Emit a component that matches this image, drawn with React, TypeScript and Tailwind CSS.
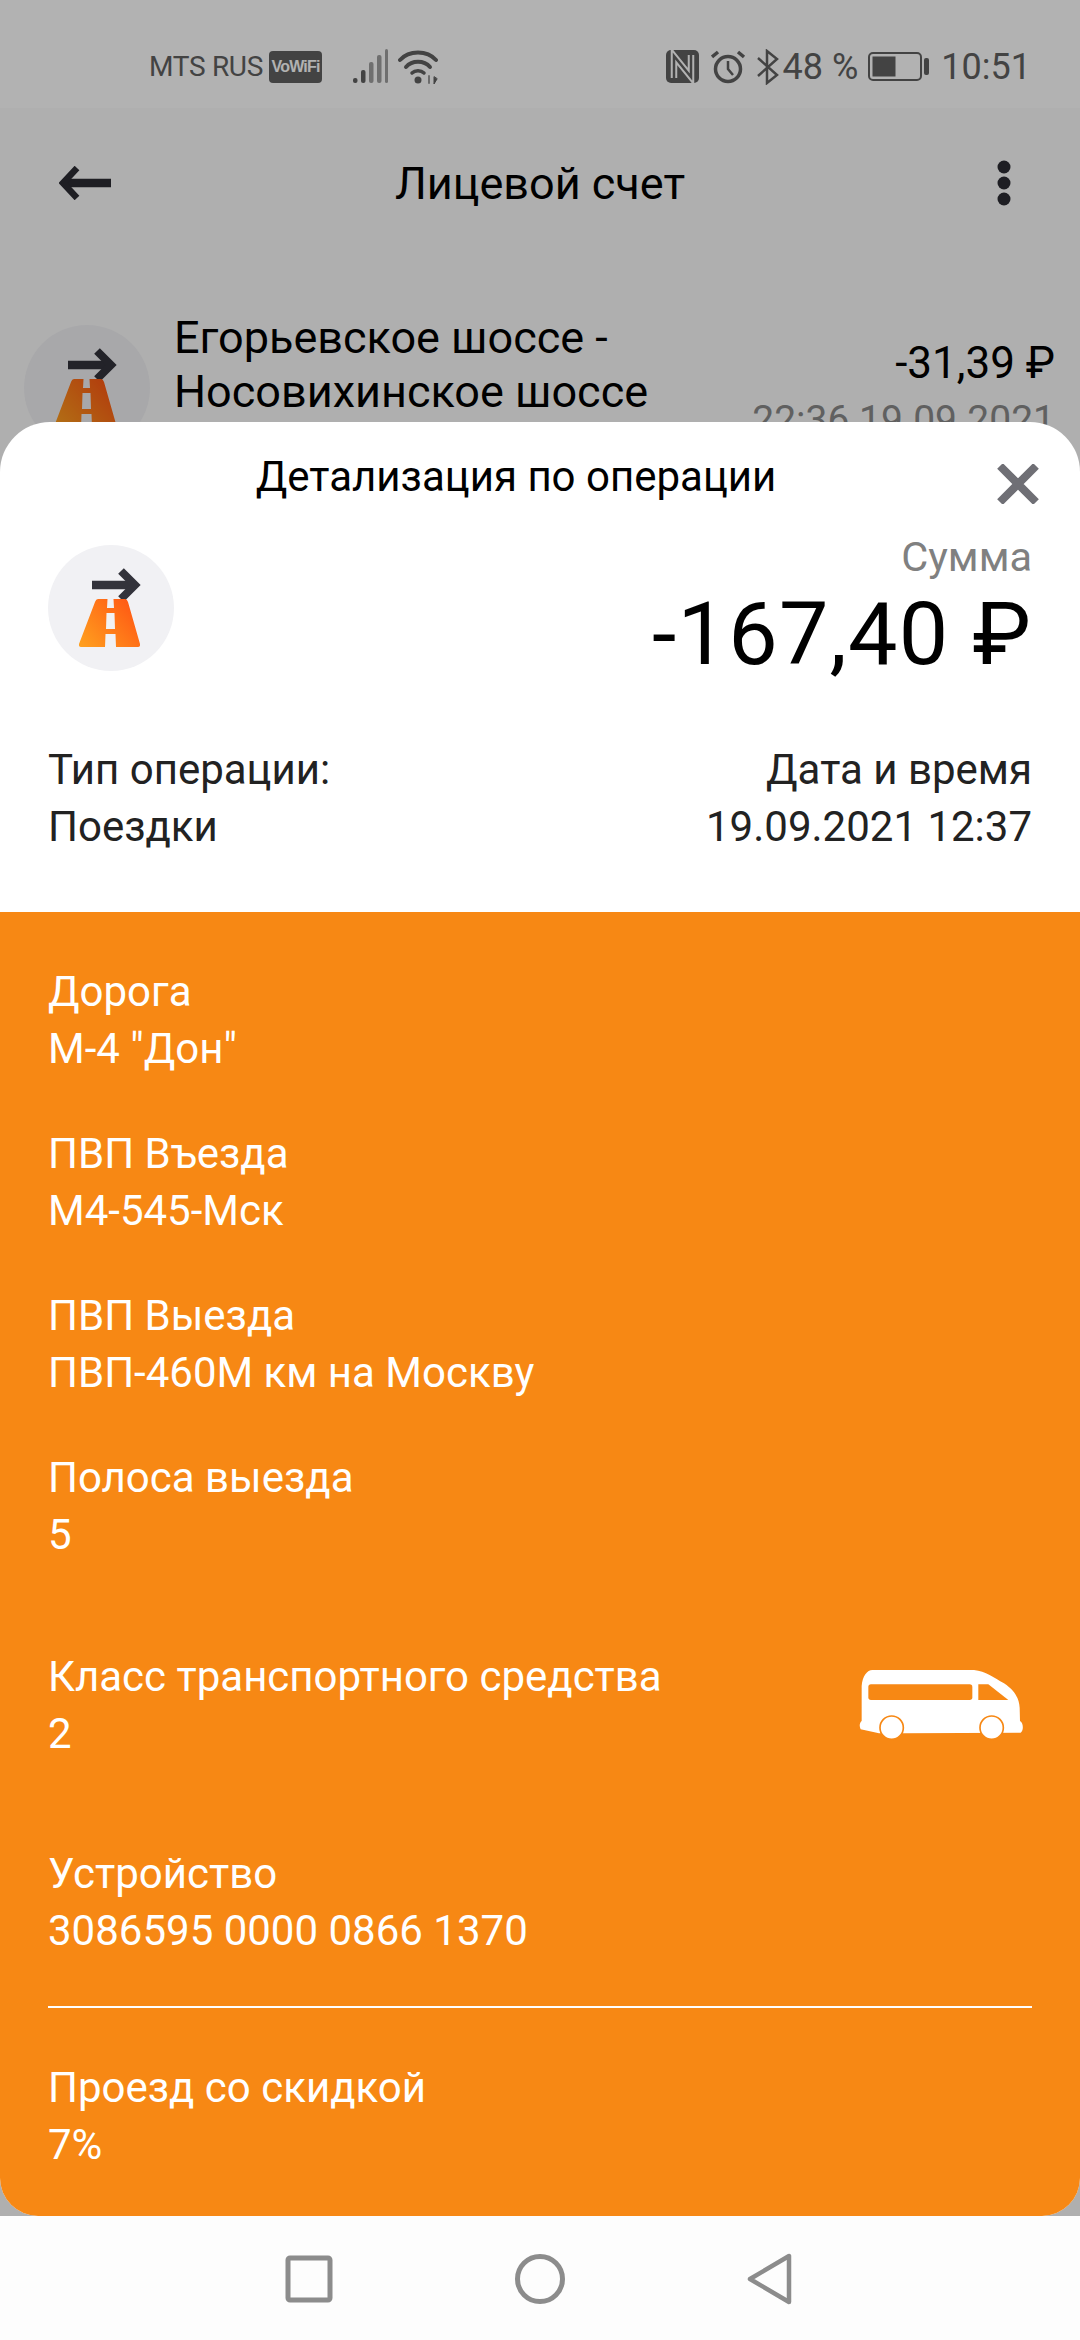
import React from "react";

function RoadIcon() {
  return (
    <svg width="126" height="126" viewBox="0 0 126 126" className="block rounded-full bg-[#f1f1f4]">
      <defs>
        <linearGradient id="road" x1="0" y1="1" x2="1" y2="0.3">
          <stop offset="0" stopColor="#ffa21f" />
          <stop offset="1" stopColor="#ff5a14" />
        </linearGradient>
      </defs>
      <path d="M44 40H84" stroke="#33333b" strokeWidth="8.5" fill="none" />
      <path d="M73 26L87 40L73 54" stroke="#33333b" strokeWidth="8" fill="none" />
      <path d="M50 54H77Q79 54 80 57L92 99Q92.5 102 90 102H33Q30.5 102 31 99L47 57Q48 54 50 54Z" fill="url(#road)" />
      <path d="M59.5 54H65.5L66 63H59Z M58.5 68H66.5L67 84H58Z M57.5 89H67.5L68 102H57Z" fill="#f1f1f4" />
    </svg>
  );
}

function StatusBar() {
  return (
    <div className="flex h-[108px] shrink-0 items-center justify-between bg-white pl-[149px] pr-[49px] pt-[26px] text-[#616161]">
      <div className="flex items-center">
        <span className="text-[28px] leading-none tracking-[-0.3px]">MTS RUS</span>
        <span className="ml-[6px] flex h-[32px] w-[53px] items-center justify-center rounded-[4px] bg-[#616161] font-['Liberation_Sans',sans-serif] text-[16px] font-bold tracking-[-0.8px] text-white">
          VoWiFi
        </span>
        <svg width="36" height="36" viewBox="0 0 36 36" className="ml-[30px]">
          <rect x="1" y="29" width="4.5" height="5" rx="2" fill="#616161" />
          <rect x="9" y="21" width="4.5" height="13" rx="2" fill="#616161" />
          <rect x="17" y="13" width="4.5" height="21" rx="2" fill="#a0a0a0" />
          <rect x="25" y="6" width="4.5" height="28" rx="2" fill="#a0a0a0" />
          <rect x="33" y="0" width="3" height="34" rx="1.5" fill="#a0a0a0" />
        </svg>
        <svg width="42" height="36" viewBox="0 0 42 36" className="ml-[10px]" fill="none" stroke="#616161" strokeLinecap="round">
          <path d="M2 11C11 1 29 1 38 11" strokeWidth="4" />
          <path d="M8 18C14 11 26 11 32 18" strokeWidth="4" />
          <path d="M14 24C17 21 23 21 26 24" strokeWidth="3.5" />
          <circle cx="20" cy="31" r="3.5" fill="#616161" stroke="none" />
          <path d="M31 27V34" stroke="#9a9a9a" strokeWidth="2" />
          <path d="M36 28V35L39 30Z" fill="#616161" stroke="#616161" strokeWidth="1" />
        </svg>
      </div>
      <div className="flex items-center">
        <svg width="34" height="34" viewBox="0 0 34 34">
          <rect width="33" height="33" rx="5" fill="#616161" />
          <path d="M8 28V6L25 27V5" fill="none" stroke="#fff" strokeWidth="6.5" />
          <path d="M8 28V6L25 27V5" fill="none" stroke="#616161" strokeWidth="2.5" />
        </svg>
        <svg width="36" height="36" viewBox="0 0 36 36" className="ml-[11px]" fill="none" stroke="#616161">
          <circle cx="17" cy="20" r="12.5" strokeWidth="3.5" />
          <path d="M17 12V20L22 26" strokeWidth="2.5" />
          <path d="M1 8L7 3M33 8L27 3" strokeWidth="3.5" />
        </svg>
        <svg width="24" height="36" viewBox="0 0 24 36" className="ml-[9px]" fill="none" stroke="#616161" strokeWidth="2.5">
          <path d="M2 9L21 26L11 34V2L21 10L2 27" />
        </svg>
        <span className="ml-[3px] text-[36px] leading-none">48 %</span>
        <svg width="62" height="30" viewBox="0 0 62 30" className="ml-[10px]">
          <rect x="1" y="1" width="52" height="27" rx="4" fill="none" stroke="#616161" strokeWidth="2" />
          <rect x="4.5" y="4.5" width="23" height="20" fill="#616161" />
          <rect x="56" y="6" width="5" height="17" rx="2" fill="#616161" />
        </svg>
        <span className="ml-[11px] text-[36px] leading-none">10:51</span>
      </div>
    </div>
  );
}

function AppBar() {
  return (
    <div className="flex h-[150px] shrink-0 items-center bg-[#fbfbfb] pl-[59px] pr-[67px]">
      <div className="flex-1">
        <svg width="52" height="34" viewBox="0 0 52 34" fill="none" stroke="#2b2b33" className="block">
          <path d="M5 17H52" strokeWidth="8.5" />
          <path d="M18 2L4 17L18 32" strokeWidth="6.5" />
        </svg>
      </div>
      <span className="ml-[8px] text-[45px] leading-none text-black">Лицевой счет</span>
      <div className="flex flex-1 justify-end">
        <svg width="18" height="46" viewBox="0 0 18 46" fill="#2b2b33" className="block">
          <circle cx="9" cy="7" r="6.5" />
          <circle cx="9" cy="23" r="6.5" />
          <circle cx="9" cy="39" r="6.5" />
        </svg>
      </div>
    </div>
  );
}

function HistoryRow() {
  return (
    <div className="flex items-start bg-[#fbfbfb] pl-[24px] pr-[25px] pt-[53px]">
      <div className="mt-[14px]">
        <RoadIcon />
      </div>
      <div className="ml-[24px] flex-1 text-[45px] leading-[54px] text-black">
        <div>Егорьевское шоссе -</div>
        <div>Носовихинское шоссе</div>
      </div>
      <div className="flex flex-col items-end pt-[28px]">
        <span className="text-[44px] leading-[48px] text-black">-31,39 ₽</span>
        <span className="mt-[11px] text-[39px] leading-[44px] text-[#8a8a8a]">22:36 19.09.2021</span>
      </div>
    </div>
  );
}

function Field({ label, value }: { label: string; value: string }) {
  return (
    <div className="text-[42px] leading-[57px] text-white">
      <div>{label}</div>
      <div>{value}</div>
    </div>
  );
}

function Van() {
  return (
    <svg width="165" height="74" viewBox="110 76 495 222" className="mr-[8px]">
      <path
        d="M150 82H455C490 85 515 105 545 122C575 142 590 165 592 195L593 235C604 240 604 266 595 270L245 272L170 272L115 260C110 250 112 240 118 235L118 130C120 100 135 82 150 82Z"
        fill="#fff"
      />
      <path d="M146 125H442Q450 125 450 133V164Q450 172 442 172H146Q138 172 138 164V133Q138 125 146 125Z" fill="#f78814" />
      <path d="M468 125H498L558 172H468Z" fill="#f78814" />
      <circle cx="208" cy="255" r="35" fill="#fff" stroke="#f78814" strokeWidth="5" />
      <circle cx="508" cy="255" r="35" fill="#fff" stroke="#f78814" strokeWidth="5" />
    </svg>
  );
}

function DetailSheet() {
  return (
    <div className="absolute inset-x-0 bottom-0 flex h-[1794px] flex-col overflow-hidden rounded-t-[50px] rounded-b-[38px] bg-white">
      <div className="relative flex h-[490px] shrink-0 flex-col px-[48px] text-[#222]">
        <div className="pr-[48px] pt-[32px] text-center text-[42px] leading-[46px] text-black">Детализация по операции</div>
        <svg width="42" height="40" viewBox="0 0 42 40" className="absolute right-[41px] top-[42px]" stroke="#6f6f75" strokeWidth="8">
          <path d="M3 2L39 38M39 2L3 38" />
        </svg>
        <div className="mt-[45px] flex items-start justify-between">
          <RoadIcon />
          <div className="flex flex-col items-end">
            <span className="mt-[-11px] text-[41.5px] leading-[46px] text-[#808080]">Сумма</span>
            <span className="mt-[4px] text-[88px] leading-[100px] tracking-[1.2px] text-black">-167,40 ₽</span>
          </div>
        </div>
        <div className="mt-[57px] flex justify-between text-[42px] leading-[57px]">
          <div>
            <div>Тип операции:</div>
            <div>Поездки</div>
          </div>
          <div className="text-right">
            <div>Дата и время</div>
            <div>19.09.2021 12:37</div>
          </div>
        </div>
      </div>
      <div className="flex flex-1 flex-col bg-[#f78814] px-[48px] pt-[51px]">
        <div className="flex flex-col gap-[48px]">
          <Field label="Дорога" value={'М-4 "Дон"'} />
          <Field label="ПВП Въезда" value="М4-545-Мск" />
          <Field label="ПВП Выезда" value="ПВП-460М км на Москву" />
          <Field label="Полоса выезда" value="5" />
        </div>
        <div className="mt-[85px] flex items-center justify-between">
          <Field label="Класс транспортного средства" value="2" />
          <Van />
        </div>
        <div className="mt-[83px]">
          <Field label="Устройство" value="3086595 0000 0866 1370" />
        </div>
        <div className="mt-[47px] h-[2px] bg-white" />
        <div className="mt-[51px]">
          <Field label="Проезд со скидкой" value="7%" />
        </div>
      </div>
    </div>
  );
}

function NavBar() {
  return (
    <div className="relative flex h-[124px] shrink-0 items-center bg-[#fdfdfd] pt-[2px]">
      <svg width="52" height="52" viewBox="0 0 52 52" className="ml-[283px]" fill="none" stroke="#8c8c8c" strokeWidth="5">
        <rect x="5" y="5" width="42" height="42" rx="2" />
      </svg>
      <svg width="52" height="52" viewBox="0 0 52 52" className="ml-[179px]" fill="none" stroke="#8c8c8c" strokeWidth="5">
        <circle cx="26" cy="26" r="22.5" />
      </svg>
      <svg width="46" height="52" viewBox="0 0 46 52" className="ml-[181px]" fill="none" stroke="#8c8c8c" strokeWidth="4.5" strokeLinejoin="round">
        <path d="M42 3V49L3 26Z" />
      </svg>
    </div>
  );
}

export default function App() {
  return (
    <div className="flex h-[2340px] w-[1080px] flex-col overflow-hidden bg-white font-['Roboto',sans-serif]">
      <div className="relative flex-1 overflow-hidden bg-[#fbfbfb]">
        <StatusBar />
        <AppBar />
        <HistoryRow />
        {/* dimmed backdrop under the bottom sheet */}
        <div className="absolute inset-0 bg-black/30" />
        <DetailSheet />
      </div>
      <NavBar />
    </div>
  );
}
